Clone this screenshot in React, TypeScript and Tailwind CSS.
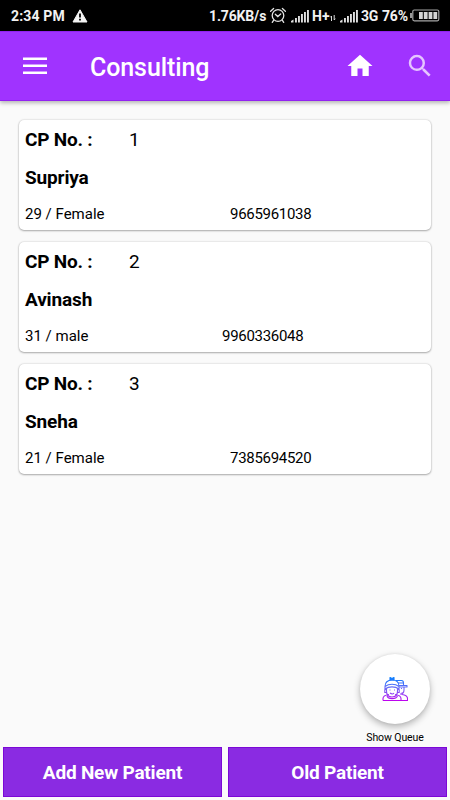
import React from "react";

type Patient = { no: number; name: string; info: string; phone: string; phoneClass: string };

const patients: Patient[] = [
  { no: 1, name: "Supriya", info: "29 / Female", phone: "9665961038", phoneClass: "w-[205px]" },
  { no: 2, name: "Avinash", info: "31 / male", phone: "9960336048", phoneClass: "w-[197px]" },
  { no: 3, name: "Sneha", info: "21 / Female", phone: "7385694520", phoneClass: "w-[205px]" },
];

function Signal() {
  return (
    <svg width="19" height="14" viewBox="0 0 19 14" fill="#dedede" className="shrink-0">
      <path d="M0 13.5v-1.5l2.500-1.500v3zM4 9h1.900v4.500H4zM7 7h1.900v6.500H7zM10 5h1.900v8.500H10zM13 3h1.900v10.500H13zM16 1h1.900v12.500H16z" />
    </svg>
  );
}

function StatusBar() {
  return (
    <div className="flex h-[31px] items-center bg-black pt-[1px] pl-[11px] text-[14px] font-bold whitespace-nowrap text-[#f2f2f2]">
      <span className="w-[61px] tracking-[0.15px]">2:34 PM</span>
      <svg width="16" height="14" viewBox="0 0 16 14" className="shrink-0">
        <path d="M8 .8 15 13H1z" fill="#f4f4f4" stroke="#f4f4f4" strokeLinejoin="round" />
        <path d="M7.1 4.5h1.8v4H7.1zM7.1 9.8h1.8v1.7H7.1z" fill="#000" />
      </svg>
      <span className="ml-[121px] w-[60px] tracking-[-0.15px]">1.76KB/s</span>
      <svg width="18" height="17" viewBox="0 0 18 17" fill="none" stroke="#e2e2e2" strokeWidth="1.3" className="mb-[1px] shrink-0">
        <circle cx="9" cy="8.5" r="5.8" />
        <path d="M1.6 4.2 4.6 1.5M16.4 4.2l-3-2.700M4.6 13.4l-1.3 2M13.4 13.4l1.3 2M6.3 7.3 8.8 9.6l2.900-2.600" strokeLinecap="round" />
      </svg>
      <div className="mb-[1px] ml-[4px] w-[21px]"><Signal /></div>
      <span className="w-[18px]">H+</span>
      <svg width="6" height="8" viewBox="0 0 6 8" stroke="#ddd" fill="none" strokeWidth="1" className="mt-[3px] shrink-0">
        <path d="M1.500 7V2L.4 3.300M4.200 1v5l1.100-1.300" />
      </svg>
      <div className="mb-[1px] ml-[4px] w-[21px]"><Signal /></div>
      <span className="w-[21px] tracking-[-0.2px]">3G</span>
      <span className="w-[28px] tracking-[-0.2px]">76%</span>
      <svg width="30" height="13" viewBox="0 0 30 13" className="mb-[1px] shrink-0">
        <rect x="2.8" y="1" width="26" height="10.8" rx="1.5" fill="none" stroke="#a5a5a5" strokeWidth="1.2" />
        <path d="M0 4h2v5H0z" fill="#999" />
        <path d="M9 3h3.8v7H9zM13.8 3h3.8v7h-3.8zM18.6 3h3.8v7h-3.8zM23.4 3h3.8v7h-3.8z" fill="#d5d5d5" />
      </svg>
    </div>
  );
}

function Header() {
  return (
    <header className="flex h-[70px] shrink-0 items-center border-y border-y-[#9222f1] bg-[#a033ff] pl-[23px] text-white shadow-[0_2px_4px_rgba(0,0,0,0.28)]">
      <svg width="24" height="18" viewBox="0 0 24 18" fill="#fff" className="shrink-0">
        <path d="M0 .5h24v2.600H0zM0 7.500h24v2.600H0zM0 14.500h24v2.600H0z" />
      </svg>
      <h1 className="mt-[4px] ml-[43px] w-[255px] text-[25px] font-medium tracking-[-0.1px]">Consulting</h1>
      <svg width="30" height="30" viewBox="0 0 24 24" fill="#fff" className="shrink-0">
        <path d="M10 20v-6h4v6h5v-8h3L12 3 2 12h3v8z" />
      </svg>
      <svg width="30" height="30" viewBox="0 0 24 24" fill="#e5c5ff" className="ml-[30px] shrink-0">
        <path d="M15.5 14h-.79l-.28-.27A6.471 6.471 0 0 0 16 9.5 6.5 6.5 0 1 0 9.5 16c1.61 0 3.09-.59 4.23-1.57l.27.28v.79l5 4.99L20.49 19zm-6 0C7.01 14 5 11.99 5 9.5S7.01 5 9.5 5 14 7.01 14 9.5 11.99 14 9.5 14" />
      </svg>
    </header>
  );
}

function PatientCard({ p }: { p: Patient }) {
  return (
    <article className="h-[109.500px] rounded-[5px] bg-white pt-[8px] pl-[6px] text-black shadow-[0_1px_2px_rgba(0,0,0,0.28),0_0_2px_rgba(0,0,0,0.22)]">
      <div className="flex h-[24px] items-center text-[19px]">
        <span className="w-[104px] font-bold tracking-[-0.2px]">CP No. :</span>
        <span>{p.no}</span>
      </div>
      <div className="mt-[14px] h-[24px] text-[19px] leading-[24px] font-bold tracking-[-0.15px]">{p.name}</div>
      <div className="mt-[14px] flex h-[20px] items-center text-[15px]">
        <span className={p.phoneClass}>{p.info}</span>
        <span className="tracking-[-0.3px]">{p.phone}</span>
      </div>
    </article>
  );
}

function QueueButton() {
  return (
    <div className="flex w-[70px] flex-col items-center">
      <div className="flex h-[70px] w-[70px] items-center justify-center rounded-full bg-white shadow-[0_3px_7px_rgba(0,0,0,0.28),0_0_3px_rgba(0,0,0,0.08)]">
        <svg width="26" height="26" viewBox="0 0 26 26" fill="none" stroke="url(#queue)" strokeWidth="1.1" strokeLinejoin="round">
          <defs>
            <linearGradient id="queue" gradientUnits="userSpaceOnUse" x1="0" y1="1" x2="0" y2="25">
              <stop offset="0" stopColor="#007dff" />
              <stop offset=".5" stopColor="#7368f5" />
              <stop offset="1" stopColor="#c000ee" />
            </linearGradient>
          </defs>
          <path d="M8 4V1.500l2 1 2-1V4z" fill="#2b83f6" />
          <path d="M3 10.500C3 6.500 5.500 4 10 4s7 2.500 7 6.500M3 10.500c4-3 10-3 14 0v2.500c-4-2.800-10-2.800-14 0zM4.500 12.500V15c0 4 2.500 6 5.500 6s5.500-2 5.500-6v-2.500M4.500 13.500H2.800v3h2M15.500 13.500h1.700v3h-2" />
          <path d="M1 24.500v-2c0-2.500 2.500-3.500 6-4M13 18.500c3.500.5 6 1.500 6 4v2M1 24.500h24.500v-2c0-2.500-2-3.500-5.500-4v-2M5 20c1 3.500 9 3.500 10.500 0M14 4.500h5.500c1.500 0 2 1 2 2.500v2.500M16 7h5.500M17 9.500h8v1.500h-8M22 11v3c0 2.500-1.500 4-4 4M19.500 12v1M7.500 14h1M12 14h1M8 17c1.500 1.200 3 1.200 4 0" />
        </svg>
      </div>
      <span className="mt-[8px] text-[10.500px] leading-[12px] tracking-[-0.1px] whitespace-nowrap text-black">Show Queue</span>
    </div>
  );
}

export default function App() {
  return (
    <div className="flex h-[800px] w-[450px] flex-col overflow-hidden bg-[#fafafa] font-['Roboto',sans-serif]">
      <StatusBar />
      <Header />
      <main className="flex min-h-0 flex-1 flex-col">
        <div className="flex flex-col gap-[12.500px] pt-[19px] pr-[19px] pl-[19px]">
          {patients.map((p) => <PatientCard key={p.no} p={p} />)}
        </div>
        <div className="mt-auto flex justify-end pr-[20px] pb-[3px]"><QueueButton /></div>
      </main>
      <footer className="flex h-[53px] shrink-0 gap-[6px] px-[3px] pb-[3px] text-[19px] font-bold tracking-[-0.2px] text-white">
        <button className="flex-1 border border-[#7b08d6] bg-[#8a2be2] pt-[2px]">Add New Patient</button>
        <button className="flex-1 border border-[#7b08d6] bg-[#8a2be2] pt-[2px]">Old Patient</button>
      </footer>
    </div>
  );
}
